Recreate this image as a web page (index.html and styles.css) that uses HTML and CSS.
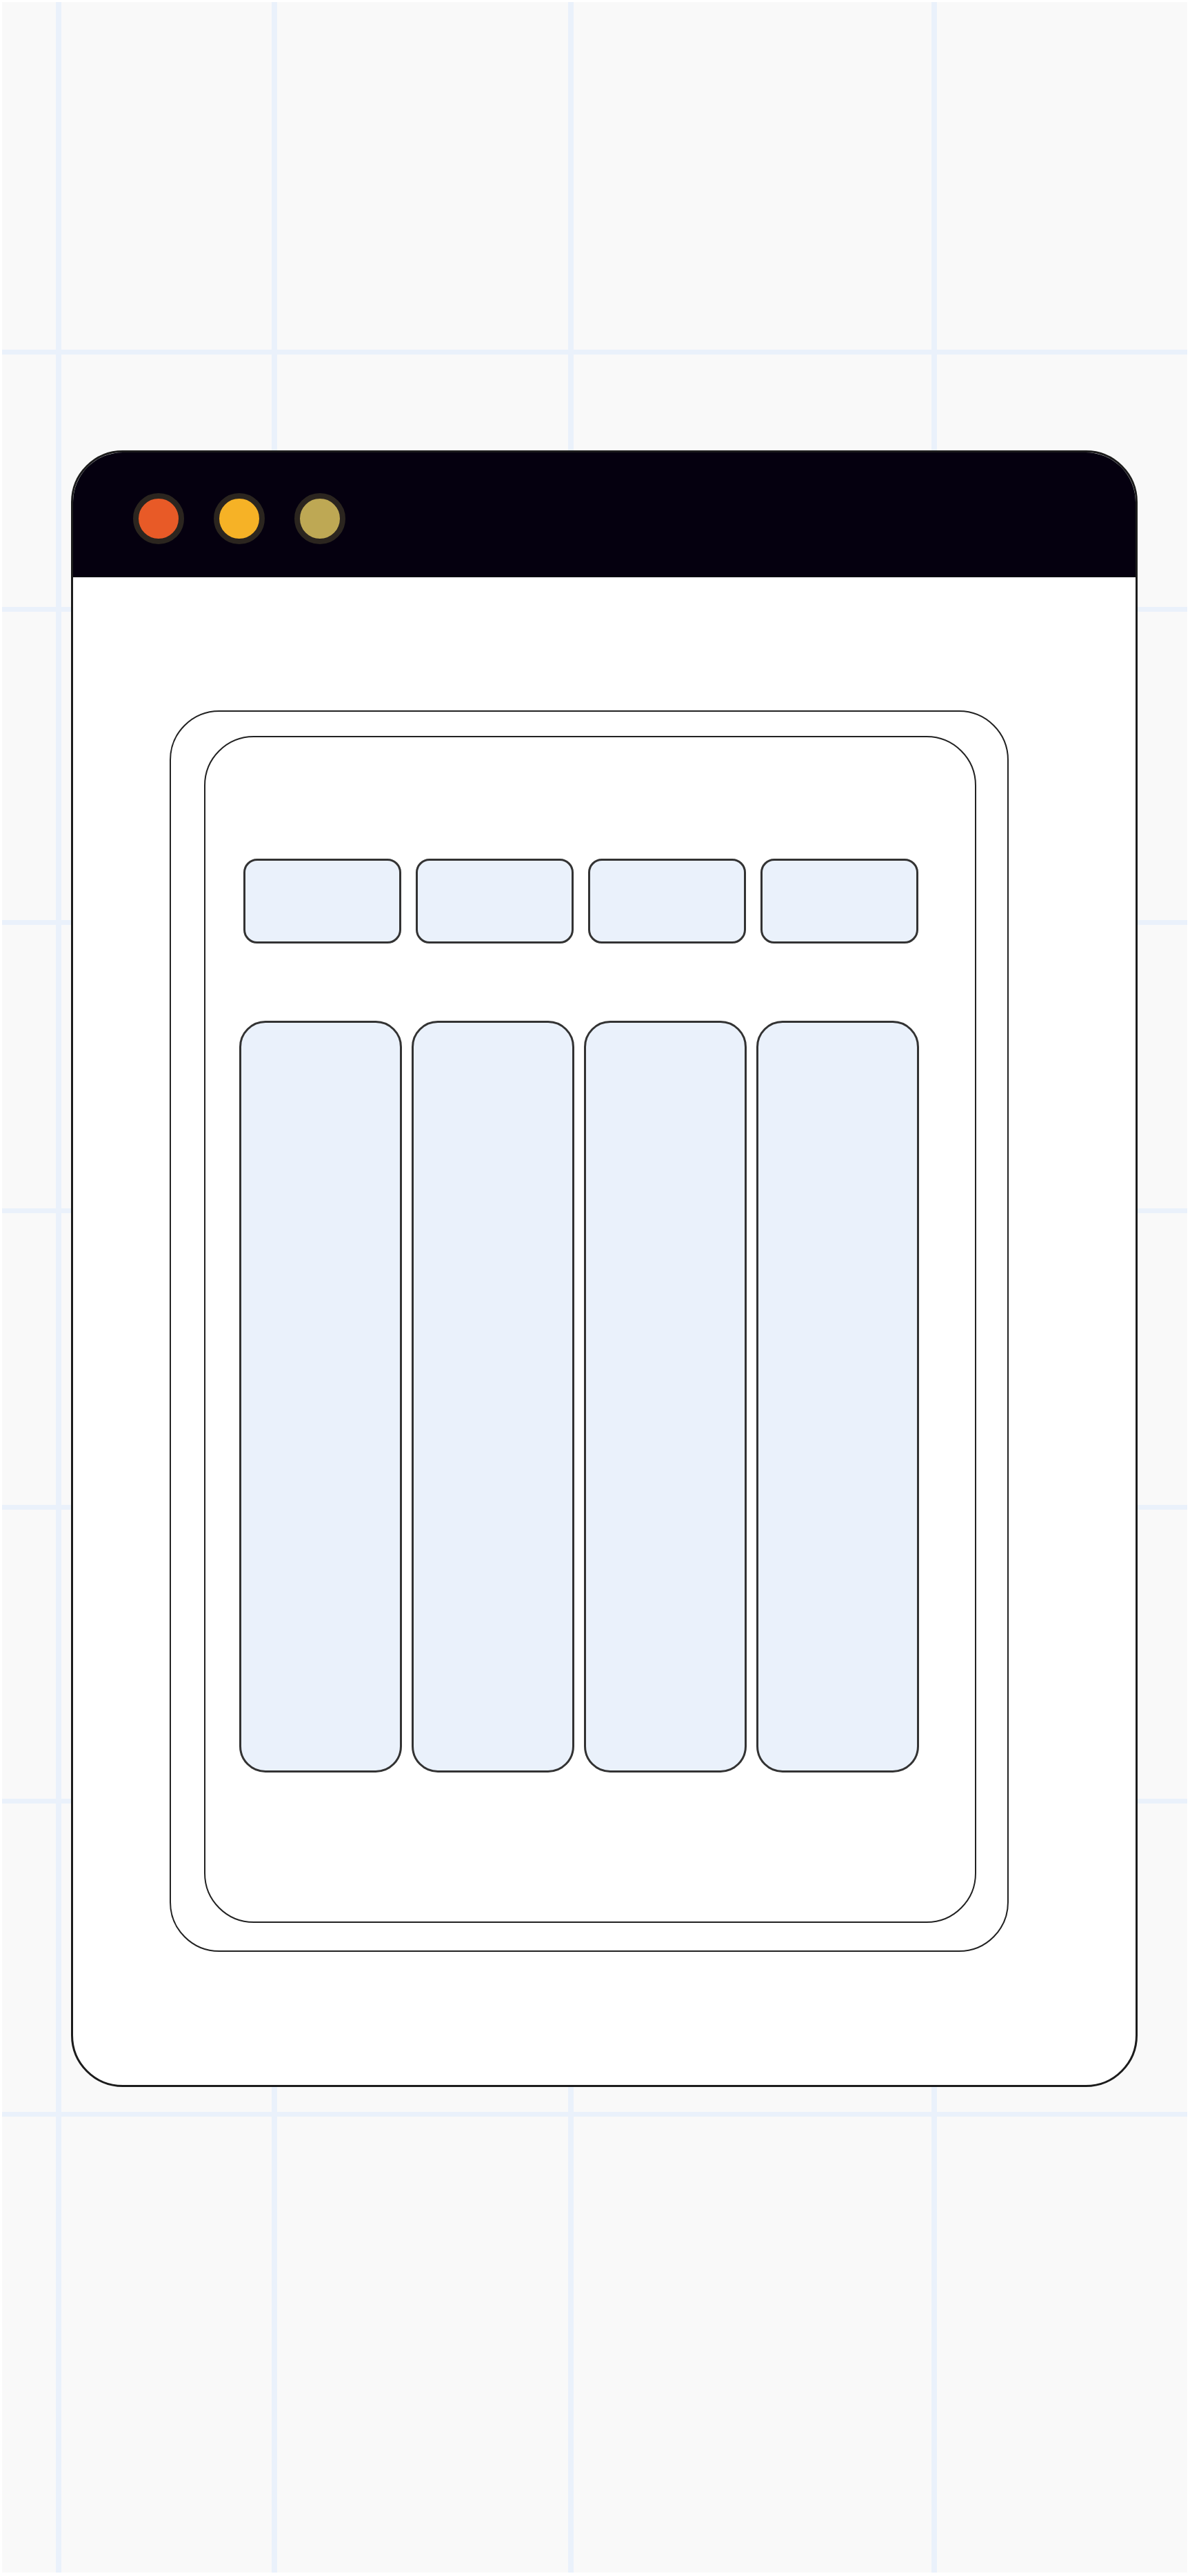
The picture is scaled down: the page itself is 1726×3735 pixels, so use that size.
FILE: index.html
```html
<!DOCTYPE html>
<html lang="en">
<head>
    <meta charset="UTF-8">
    <meta name="viewport" content="width=device-width, initial-scale=1.0">
    <title>Board Wireframe</title>
    <link rel="stylesheet" href="styles.css">
</head>
<body>
    <div class="canvas">
        <div class="window">
            <div class="titlebar">
                <span class="dot dot-close"></span>
                <span class="dot dot-min"></span>
                <span class="dot dot-max"></span>
            </div>
            <div class="frame">
                <div class="panel">
                    <div class="tabs">
                        <div class="tab"></div>
                        <div class="tab"></div>
                        <div class="tab"></div>
                        <div class="tab"></div>
                    </div>
                    <div class="columns">
                        <div class="column"></div>
                        <div class="column"></div>
                        <div class="column"></div>
                        <div class="column"></div>
                    </div>
                </div>
            </div>
        </div>
    </div>
</body>
</html>
```

FILE: styles.css
```css
html, body {
    margin: 0;
    padding: 0;
    background: #fff;
}
.canvas {
    --line: linear-gradient(#eaf1fb, #eaf1fb);
    margin: 3px 4px 5px 3px;
    height: 3727px;
    box-sizing: border-box;
    padding: 650px 0 0 100px;
    background-color: #f9f9f9;
    background-image: var(--line), var(--line), var(--line), var(--line),
        var(--line), var(--line), var(--line), var(--line), var(--line), var(--line), var(--line);
    background-repeat: no-repeat;
    background-size: 8px 100%, 8px 100%, 8px 100%, 8px 100%,
        100% 7px, 100% 7px, 100% 7px, 100% 7px, 100% 7px, 100% 7px, 100% 7px;
    background-position: 78px 0, 391px 0, 821px 0, 1348px 0,
        0 504px, 0 877px, 0 1331px, 0 1749px, 0 2179px, 0 2605px, 0 3059px;
}
.window {
    width: 1547px;
    height: 2373px;
    box-sizing: border-box;
    border: 3px solid #1c1c1c;
    border-radius: 75px;
    background: #fff;
    overflow: hidden;
}
.titlebar {
    height: 181px;
    box-sizing: border-box;
    padding: 59px 0 0 87px;
    background: #05000f;
    display: flex;
    align-items: flex-start;
    gap: 43px;
}
.dot {
    width: 74px;
    height: 74px;
    box-sizing: border-box;
    border: 8px solid #2b251f;
    border-radius: 50%;
}
.dot-close { background: #e85a27; }
.dot-min { background: #f6b226; }
.dot-max { background: #bea854; }
.frame {
    width: 1217px;
    height: 1800px;
    box-sizing: border-box;
    margin: 193px 0 0 140px;
    padding: 35px 0 0 48px;
    border: 2px solid #222;
    border-radius: 72px;
}
.panel {
    width: 1120px;
    height: 1721px;
    box-sizing: border-box;
    padding-top: 176px;
    border: 2px solid #222;
    border-radius: 72px;
}
.tabs {
    display: flex;
    gap: 21px;
    margin-left: 55px;
}
.tab {
    width: 229px;
    height: 123px;
    box-sizing: border-box;
    border: 3px solid #333;
    border-radius: 20px;
    background: #eaf1fb;
}
.columns {
    display: flex;
    gap: 14px;
    margin: 112px 0 0 49px;
}
.column {
    width: 236px;
    height: 1090px;
    box-sizing: border-box;
    border: 3px solid #333;
    border-radius: 38px;
    background: #eaf1fb;
}
```
